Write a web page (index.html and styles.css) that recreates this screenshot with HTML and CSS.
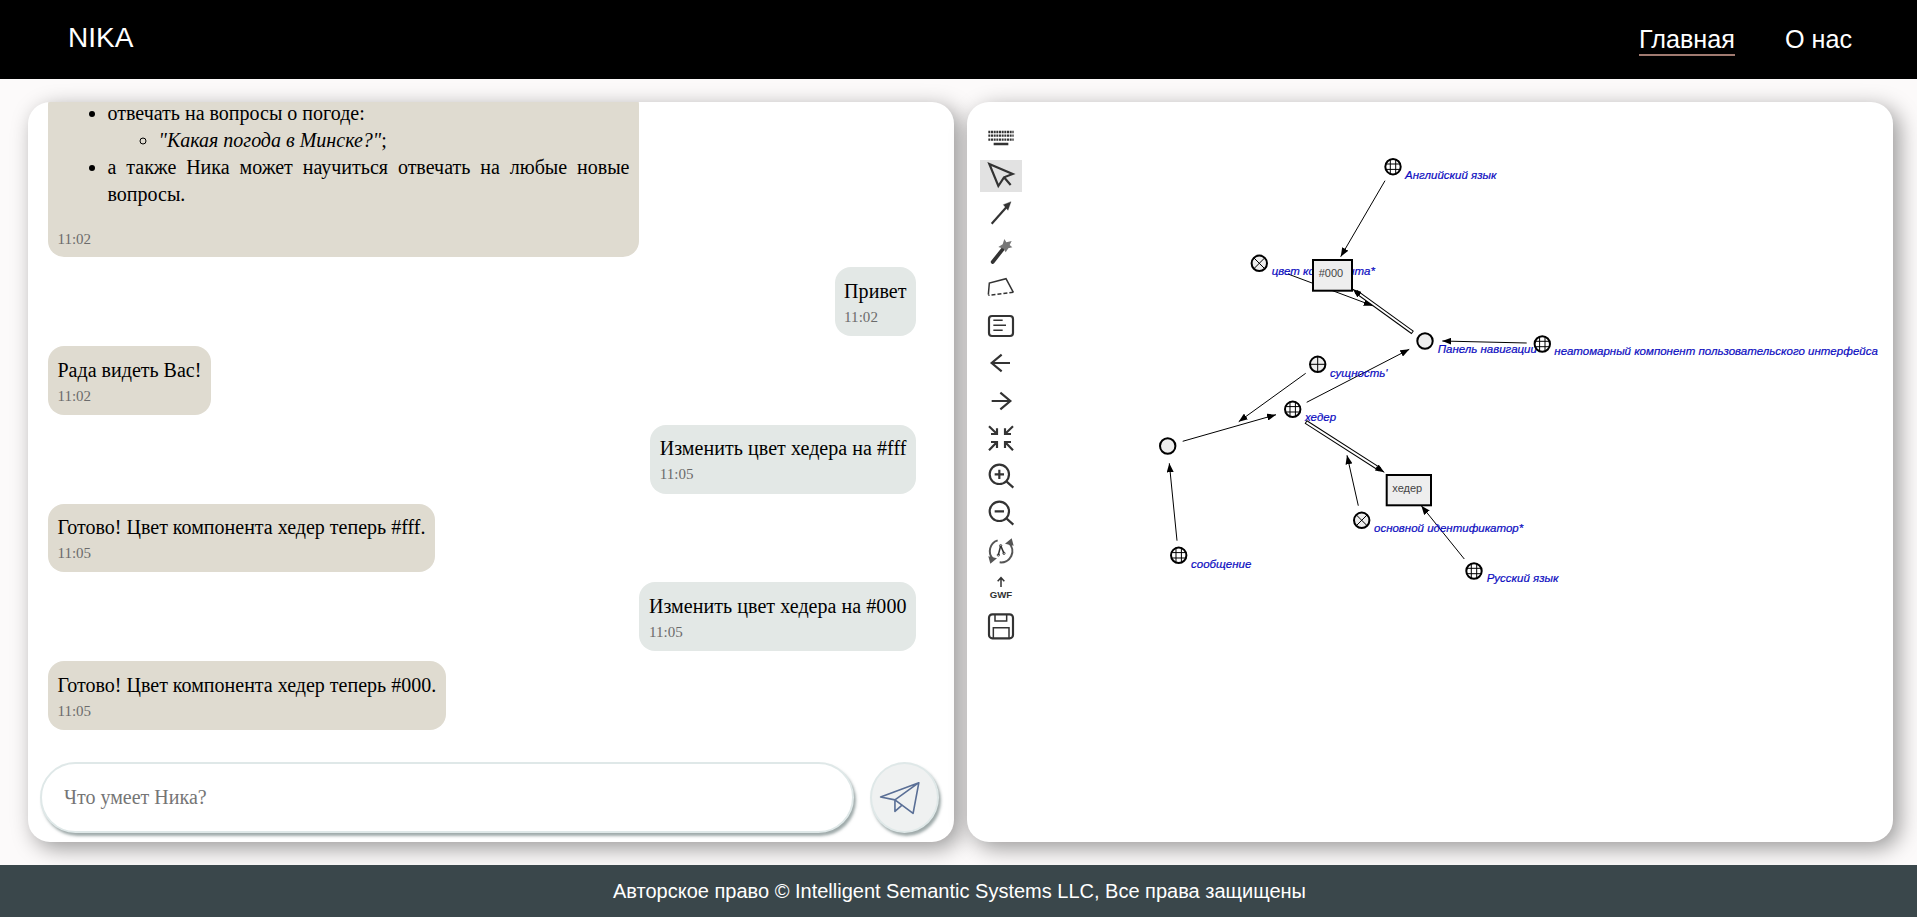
FILE: index.html
```html
<!DOCTYPE html>
<html lang="ru">
<head>
<meta charset="utf-8">
<title>NIKA</title>
<link rel="stylesheet" href="styles.css">
</head>
<body>
<header class="header">
  <div class="logo">NIKA</div>
  <nav class="nav">
    <a class="nav-link active">Главная</a>
    <a class="nav-link">О нас</a>
  </nav>
</header>
<main class="main">
  <section class="panel chat">
    <div class="messages">
      <div class="msg bot long">
        <ul class="list">
          <li>отвечать на вопросы о погоде:
            <ul class="sublist"><li><i>"Какая погода в Минске?"</i>;</li></ul>
          </li>
          <li>а также Ника может научиться отвечать на любые новые вопросы.</li>
        </ul>
        <div class="time">11:02</div>
      </div>
      <div class="msg user"><div>Привет</div><div class="time">11:02</div></div>
      <div class="msg bot"><div>Рада видеть Вас!</div><div class="time">11:02</div></div>
      <div class="msg user"><div>Изменить цвет хедера на #fff</div><div class="time">11:05</div></div>
      <div class="msg bot"><div>Готово! Цвет компонента хедер теперь #fff.</div><div class="time">11:05</div></div>
      <div class="msg user"><div>Изменить цвет хедера на #000</div><div class="time">11:05</div></div>
      <div class="msg bot"><div>Готово! Цвет компонента хедер теперь #000.</div><div class="time">11:05</div></div>
    </div>
    <form class="composer">
      <input class="input" type="text" placeholder="Что умеет Ника?">
      <button class="send" type="button" aria-label="Отправить">
        <svg class="send-icon" viewBox="871 762 68 68">
          <path d="M920 780 L880 795 L895 798 L914 812 Z M920 780 L895 798 L895 810 L903 803"/>
        </svg>
      </button>
    </form>
  </section>
  <section class="panel scg">
    <div class="toolbar">
      <button class="tool" type="button"><svg class="ti" viewBox="-42 -42 84 84">
        <path class="dots" d="M-38 -18H38M-38 -7H38M-38 5H38"/><path class="bar" d="M-22 18H22"/></svg></button>
      <button class="tool selected" type="button"><svg class="ti" viewBox="-42 -42 84 84">
        <path d="M-35 -36L35 -6L9 4L-8 30ZM9 4L29 27"/></svg></button>
      <button class="tool" type="button"><svg class="ti" viewBox="-42 -42 84 84">
        <path d="M-28 32L20 -22"/><path class="solid" d="M30 -34L7 -25L21 -8Z"/></svg></button>
      <button class="tool" type="button"><svg class="ti" viewBox="-42 -42 84 84">
        <path class="thick" d="M-25 33L5 -5"/><path class="star" d="M10 -36L16 -26L32 -30L26 -18L34 -11L22 -8L14 4L8 -7L-8 -12L5 -20Z"/></svg></button>
      <button class="tool" type="button"><svg class="ti" viewBox="-42 -42 84 84">
        <path class="thin" d="M-38 20L-35 -15L15 -28L37 13"/><path class="thin dashed" d="M37 13L-38 22"/></svg></button>
      <button class="tool" type="button"><svg class="ti" viewBox="-42 -42 84 84">
        <rect x="-36" y="-30" width="72" height="60" rx="9"/><path class="thin" d="M-23 -17H5M-23 -2H15M-23 13H5"/></svg></button>
      <button class="tool" type="button"><svg class="ti" viewBox="-42 -42 84 84">
        <path d="M-28 0H27M2 -25L-28 0L2 25"/></svg></button>
      <button class="tool" type="button"><svg class="ti" viewBox="-42 -42 84 84">
        <path d="M-28 0H27M-2 -25L28 0L-2 25"/></svg></button>
      <button class="tool" type="button"><svg class="ti" viewBox="-42 -42 84 84">
        <path d="M-36 -35L-12 -12M-12 -29V-12H-30M36 -35L12 -12M12 -29V-12H30M-36 37L-12 12M-30 12H-12V30M36 37L12 12M30 12H12V30"/></svg></button>
      <button class="tool" type="button"><svg class="ti" viewBox="-42 -42 84 84">
        <circle cx="-5" cy="-5" r="29"/><path d="M17 17L37 35M-19 -5H9M-5 -19V9"/></svg></button>
      <button class="tool" type="button"><svg class="ti" viewBox="-42 -42 84 84">
        <circle cx="-5" cy="-5" r="29"/><path d="M17 17L37 35M-19 -5H9"/></svg></button>
      <button class="tool" type="button"><svg class="ti" viewBox="-42 -42 84 84">
        <path class="gray" d="M-10 -32A34 34 0 0 0 -24 24M24 -24A34 34 0 0 1 -4 34"/>
        <path class="graysolid" d="M-38 16L-12 22L-32 38ZM38 -16L12 -22L32 -38Z"/>
        <path class="thin" d="M-1 -16L-8 12M-1 -16L9 7"/>
        <circle class="small" cx="-1" cy="-16" r="3.5"/><circle class="small" cx="-8" cy="12" r="3.5"/><circle class="small" cx="9" cy="7" r="3.5"/></svg></button>
      <button class="tool" type="button"><svg class="ti" viewBox="-42 -42 84 84">
        <path class="thin" d="M0 -3V-31M-10 -20L0 -31L10 -20"/><text class="gwf" x="0" y="30">GWF</text></svg></button>
      <button class="tool" type="button"><svg class="ti" viewBox="-42 -42 84 84">
        <rect x="-36" y="-35" width="72" height="72" rx="10"/><path class="thin" d="M-18 -35V-15H17V-35M-23 37V5H24V37"/></svg></button>
    </div>
    <svg class="canvas" viewBox="1022 102 871 739" width="871" height="739">
      <defs>
        <marker id="ah" viewBox="0 0 9 7" refX="9" refY="3.5" markerWidth="9" markerHeight="7" markerUnits="userSpaceOnUse" orient="auto"><path d="M0 0L9 3.5L0 7Z"/></marker>
      </defs>
      <g class="edges">
        <line x1="1385" y1="180.7" x2="1340.7" y2="256.7" marker-end="url(#ah)"/>
        <line x1="1288" y1="274" x2="1372.7" y2="305.7" marker-end="url(#ah)"/>
        <line x1="1526.7" y1="343" x2="1442.3" y2="341" marker-end="url(#ah)"/>
        <line x1="1305.7" y1="373.3" x2="1238.7" y2="421.7" marker-end="url(#ah)"/>
        <line x1="1306.7" y1="402.3" x2="1409.3" y2="349.3" marker-end="url(#ah)"/>
        <line x1="1182.7" y1="441.3" x2="1276" y2="414.7" marker-end="url(#ah)"/>
        <line x1="1177" y1="540.7" x2="1169.3" y2="463.3" marker-end="url(#ah)"/>
        <line x1="1358.3" y1="505.7" x2="1347" y2="455.3" marker-end="url(#ah)"/>
        <line x1="1464.3" y1="559" x2="1421.3" y2="505.7" marker-end="url(#ah)"/>
        <line class="dbl" x1="1412.7" y1="332.7" x2="1356" y2="291.7"/>
        <line class="dbl-in" x1="1412" y1="332" x2="1358" y2="293"/>
        <line x1="1360" y1="295" x2="1352.7" y2="289" marker-end="url(#ah)"/>
        <line class="dbl" x1="1305.7" y1="421.7" x2="1380" y2="469.5"/>
        <line class="dbl-in" x1="1306.5" y1="422.3" x2="1378" y2="468.2"/>
        <line x1="1376" y1="467" x2="1384.3" y2="472.3" marker-end="url(#ah)"/>
      </g>
      <g class="labels">
        <text x="1405" y="179">Английский язык</text>
        <text x="1271.7" y="275">цвет компонента*</text>
        <text x="1437.7" y="353">Панель навигации</text>
        <text x="1554.3" y="355">неатомарный компонент пользовательского интерфейса</text>
        <text x="1330" y="376.5">сущность'</text>
        <text x="1305" y="421">хедер</text>
        <text x="1191" y="567.5">сообщение</text>
        <text x="1374" y="532">основной идентификатор*</text>
        <text x="1486.7" y="582">Русский язык</text>
      </g>
      <g class="nodes">
        <g transform="translate(1393 166.7)"><circle r="7.7"/><path d="M-7.7 -2.7H7.7M-7.7 2.7H7.7M-2.7 -7.7V7.7M2.7 -7.7V7.7"/></g>
        <g transform="translate(1542.3 344)"><circle r="7.7"/><path d="M-7.7 -2.7H7.7M-7.7 2.7H7.7M-2.7 -7.7V7.7M2.7 -7.7V7.7"/></g>
        <g transform="translate(1292.7 409.3)"><circle r="7.7"/><path d="M-7.7 -2.7H7.7M-7.7 2.7H7.7M-2.7 -7.7V7.7M2.7 -7.7V7.7"/></g>
        <g transform="translate(1178.7 555.3)"><circle r="7.7"/><path d="M-7.7 -2.7H7.7M-7.7 2.7H7.7M-2.7 -7.7V7.7M2.7 -7.7V7.7"/></g>
        <g transform="translate(1474 571)"><circle r="7.7"/><path d="M-7.7 -2.7H7.7M-7.7 2.7H7.7M-2.7 -7.7V7.7M2.7 -7.7V7.7"/></g>
        <g transform="translate(1317.7 364.3)"><circle class="light" r="7.7"/><path d="M-7.7 0H7.7M0 -7.7V7.7"/></g>
        <g transform="translate(1259.3 263.3)"><circle class="light" r="7.7"/><path d="M-5.4 -5.4L5.4 5.4M5.4 -5.4L-5.4 5.4"/></g>
        <g transform="translate(1361.7 520.3)"><circle class="light" r="7.7"/><path d="M-5.4 -5.4L5.4 5.4M5.4 -5.4L-5.4 5.4"/></g>
        <circle class="light" cx="1425" cy="341" r="7.7"/>
        <circle class="light" cx="1167.7" cy="446" r="7.7"/>
        <rect class="light" x="1313" y="260" width="39" height="30.7"/>
        <rect class="light" x="1386.7" y="475" width="44.3" height="30.3"/>
      </g>
      <text class="content" x="1318.7" y="277.3">#000</text>
      <text class="content" x="1392.3" y="492">хедер</text>
    </svg>
  </section>
</main>
<footer class="footer">Авторское право © Intelligent Semantic Systems LLC, Все права защищены</footer>
</body>
</html>
```
FILE: styles.css
```css
* { box-sizing: border-box; }
html, body { height: 100%; }
body {
  margin: 0;
  height: 100vh;
  overflow: hidden;
  display: flex;
  flex-direction: column;
  background: #fcfafa;
  font-family: "Liberation Sans", Arial, sans-serif;
}
.header {
  flex: 0 0 79px;
  background: #000;
  color: #fff;
  display: flex;
  align-items: center;
  justify-content: space-between;
  padding: 0 65px 3px 68px;
}
.logo { font-size: 28px; line-height: 32px; }
.nav { display: flex; gap: 50px; padding-top: 3px; }
.nav-link {
  font-size: 25.2px;
  line-height: 30px;
  border-bottom: 2px solid transparent;
}
.nav-link.active { border-bottom-color: #a07a70; }
.main {
  flex: 1;
  min-height: 0;
  display: flex;
  gap: 13px;
  padding: 23px 24px 23px 28px;
}
.panel {
  flex: 1;
  min-width: 0;
  background: #fff;
  border-radius: 22px;
  box-shadow: 6px 6px 22px rgba(0, 0, 0, .4);
  overflow: hidden;
}
.chat { display: flex; flex-direction: column; }
.messages {
  flex: 1;
  min-height: 0;
  overflow: hidden;
  display: flex;
  flex-direction: column;
  justify-content: flex-end;
  gap: 10px;
  padding: 0 38px 32px 20px;
  font-family: "Liberation Serif", "Times New Roman", serif;
  font-size: 20px;
  line-height: 27px;
}
.msg {
  flex: none;
  max-width: 591px;
  padding: 10.5px 9.5px 7.3px;
  border-radius: 16px;
}
.msg.bot { align-self: flex-start; background: #dfdbd0; }
.msg.user { align-self: flex-end; background: #e3e8e6; letter-spacing: .05px; }
.long { width: 591px; text-align: justify; padding-bottom: 6.5px; }
.list { margin: 0 0 19px; padding-left: 50px; }
.sublist { margin: 0; padding-left: 51px; }
.time { font-size: 15px; line-height: 24px; color: #6b6b6b; }
.composer {
  flex: none;
  display: flex;
  gap: 16px;
  padding: 0 15px 9px 12px;
}
.input {
  flex: 1;
  min-width: 0;
  height: 71px;
  padding: 0 22px;
  border: 2px solid #dfe8e8;
  border-radius: 36px;
  background: #fff;
  box-shadow: 2px 3px 3px rgba(80, 100, 100, .55);
  font-family: "Liberation Serif", "Times New Roman", serif;
  font-size: 20px;
  outline: none;
}
.input::placeholder { color: #757575; }
.send {
  flex: none;
  width: 69px;
  height: 71px;
  padding: 0;
  border: 2px solid #dfe8e8;
  border-radius: 50%;
  background: #eff1f1;
  box-shadow: 2px 3px 3px rgba(80, 100, 100, .55);
  display: flex;
  align-items: center;
  justify-content: center;
}
.send-icon {
  width: 68px;
  height: 68px;
  fill: none;
  stroke: #5a6f96;
  stroke-width: 1.7;
  stroke-linejoin: round;
}
.scg { display: flex; }
.toolbar {
  flex: none;
  display: flex;
  flex-direction: column;
  gap: 5.54px;
  padding: 20px 0 0 13px;
}
.tool {
  width: 42px;
  height: 32px;
  padding: 0;
  border: 0;
  background: none;
  display: flex;
  align-items: center;
  justify-content: center;
}
.tool.selected { background: #e2e2e2; }
.ti {
  width: 28px;
  height: 28px;
  overflow: visible;
  fill: none;
  stroke: #333;
  stroke-width: 6.5;
}
.ti .dots { stroke-width: 7; stroke-dasharray: 6 2; }
.ti .bar { stroke-width: 7; }
.ti .solid { fill: #333; stroke-width: 1; }
.ti .thick { stroke-width: 11; stroke-linecap: round; }
.ti .star { fill: #777; stroke: none; }
.ti .thin { stroke-width: 4.5; }
.ti .dashed { stroke-dasharray: 12 6; }
.ti .gray { stroke: #555; stroke-width: 6; }
.ti .graysolid { fill: #555; stroke: none; }
.ti .small { stroke-width: 2.5; }
.ti .gwf {
  font-family: "Liberation Sans", Arial, sans-serif;
  font-weight: 700;
  font-size: 29px;
  text-anchor: middle;
  fill: #333;
  stroke: none;
}
.canvas { flex: none; display: block; }
.edges line { stroke: #000; stroke-width: 1; }
.edges .dbl { stroke-width: 4; }
.edges .dbl-in { stroke: #fff; stroke-width: 2; }
.labels text {
  font-family: "Liberation Sans", Arial, sans-serif;
  font-size: 11.5px;
  font-style: italic;
  fill: #0b0bbf;
  stroke: #0b0bbf;
  stroke-width: .2;
}
.nodes circle, .nodes rect { fill: none; stroke: #000; stroke-width: 2; }
.nodes path { fill: none; stroke: #000; stroke-width: 1; }
.nodes .light, .nodes rect { fill: #eee; }
.content {
  font-family: "Liberation Sans", Arial, sans-serif;
  font-size: 11px;
  fill: #444;
}
.footer {
  flex: 0 0 52px;
  padding-left: 2px;
  background: #3a474b;
  color: #fff;
  font-size: 20px;
  line-height: 52px;
  text-align: center;
}
```
